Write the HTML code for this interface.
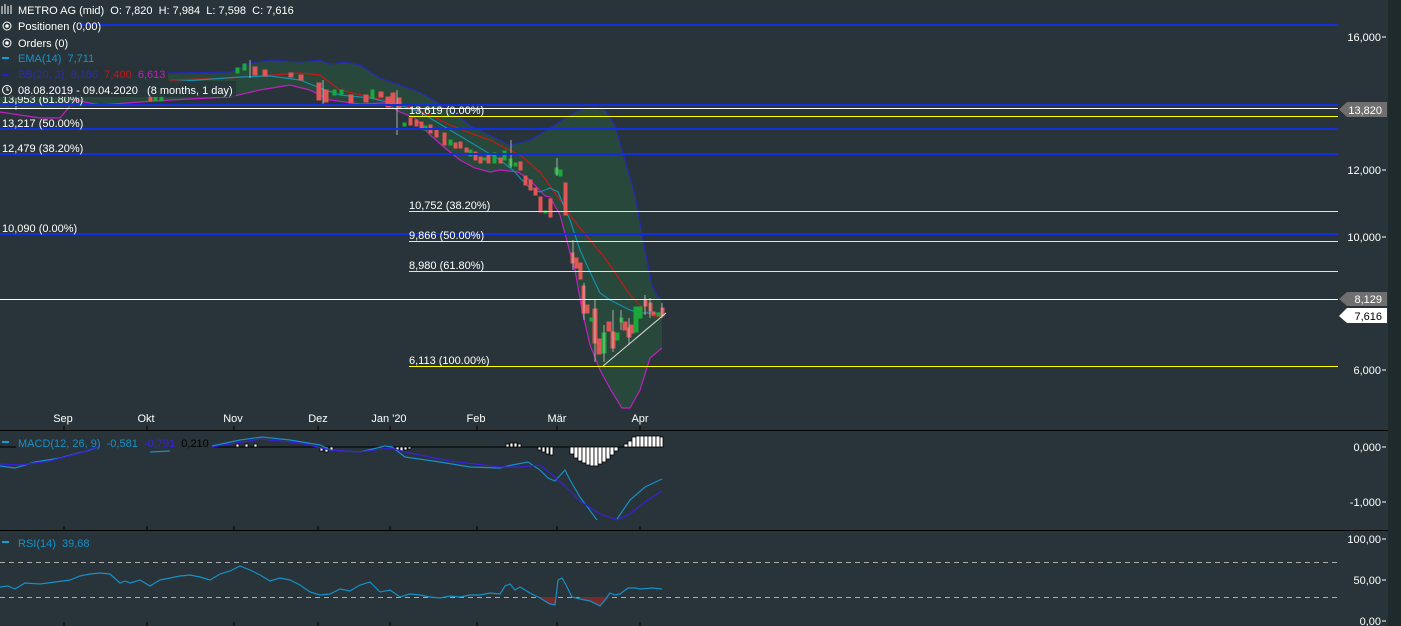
<!DOCTYPE html>
<html><head><meta charset="utf-8"><style>
html,body{margin:0;padding:0;background:#283439;overflow:hidden}
svg{display:block}
text{font-family:"Liberation Sans",sans-serif;font-size:11px;white-space:pre}
.h rect{shape-rendering:crispEdges}
</style></head><body>
<svg width="1401" height="626" viewBox="0 0 1401 626" xmlns="http://www.w3.org/2000/svg" xml:space="preserve">
<rect width="1401" height="626" fill="#283439"/>
<rect x="1388" y="0" width="13" height="626" fill="#1e2a2c"/>

<path d="M130,75 L170,73 230,72 240,68 250,63 270,60 300,62 320,60 330,64 345,62 360,65 380,78 400,85 420,92 450,110 470,125 490,135 510,145 530,140 550,128 565,118 580,110 595,107 605,110 615,125 625,160 635,195 645,250 652,285 658,297 662,298 L662,348 650,358 640,390 630,408 622,408 612,392 600,370 590,345 582,310 575,270 568,245 560,215 550,197 545,196 530,180 518,172 500,170 490,172 475,168 460,160 445,148 430,135 415,118 400,112 385,103 360,104 330,100 310,90 290,85 260,90 230,97 170,100 140,102 100,105 60,108 0,108 0,97 130,97 Z" fill="#27483a"/>
<path d="M130,75 L170,73 230,72 240,68 250,63 270,60 300,62 320,60 330,64 345,62 360,65 380,78 400,85 420,92 450,110 470,125 490,135 510,145 530,140 550,128 565,118 580,110 595,107 605,110 615,125 625,160 635,195 645,250 652,285 658,297 662,298" fill="none" stroke="#2626b8" stroke-width="1.2"/>
<path d="M0,112 L40,118 60,118 75,100 100,105 140,102 170,100 230,97 260,90 290,85 310,90 330,100 360,104 385,103 400,112 415,118 430,135 445,148 460,160 475,168 490,172 500,170 518,172 530,180 545,196 550,197 560,215 568,245 575,270 582,310 590,345 600,370 612,392 622,408 630,408 640,390 650,358 662,348" fill="none" stroke="#c020c0" stroke-width="1.2"/>
<path d="M170,80 L230,78 260,76 300,73 320,75 340,90 370,97 400,103 430,115 450,125 470,133 490,140 505,148 520,155 540,172 560,200 575,222 590,240 605,258 620,280 630,295 640,305 650,315 662,318" fill="none" stroke="#c81818" stroke-width="1.2"/>
<path d="M170,82 L240,77 270,76 300,80 320,88 340,95 370,98 400,105 420,112 450,130 475,145 500,160 515,172 520,178 530,188 540,192 550,188 558,192 570,220 580,250 590,272 600,293 610,300 620,305 630,310 640,313 650,313 662,313" fill="none" stroke="#1590b0" stroke-width="1.2"/>

<g stroke-width="1">
<g fill="#e05555" stroke="#e05555">
<rect x="149" y="96" width="3" height="5"/><rect x="253" y="67" width="4" height="8"/><rect x="263" y="70" width="4" height="6"/><rect x="289" y="73" width="4" height="4"/><rect x="299" y="75" width="4" height="5"/><rect x="317" y="83" width="4" height="17"/><rect x="324" y="90" width="4" height="12"/><rect x="349" y="95" width="4" height="8"/><rect x="364" y="95" width="4" height="7"/><rect x="379" y="92" width="4" height="5"/><rect x="386" y="97" width="4" height="10"/>
<rect x="391" y="93" width="4" height="12"/><rect x="397" y="98" width="4" height="10"/><rect x="409" y="118" width="3" height="7"/><rect x="415" y="120" width="3" height="6"/><rect x="420" y="122" width="3" height="6"/><rect x="429" y="125" width="3" height="8"/><rect x="435" y="130" width="3" height="7"/><rect x="443" y="133" width="3" height="12"/><rect x="454" y="143" width="3" height="5"/><rect x="459" y="142" width="3" height="6"/><rect x="465" y="148" width="3" height="4"/><rect x="474" y="152" width="3" height="8"/><rect x="479" y="157" width="3" height="6"/><rect x="487" y="155" width="3" height="8"/><rect x="499" y="158" width="3" height="5"/><rect x="519" y="162" width="3" height="8"/><rect x="524" y="176" width="3" height="9"/><rect x="529" y="180" width="3" height="10"/><rect x="534" y="188" width="3" height="7"/><rect x="539" y="197" width="3" height="15"/><rect x="549" y="199" width="3" height="18"/><rect x="564" y="183" width="3" height="32"/><rect x="571" y="253" width="3" height="10"/><rect x="575" y="258" width="3" height="10"/><rect x="579" y="263" width="3" height="16"/><rect x="582" y="286" width="3" height="27"/><rect x="586" y="305" width="3" height="8"/><rect x="593" y="309" width="4" height="34"/><rect x="597" y="339" width="4" height="15"/><rect x="607" y="322" width="4" height="9"/><rect x="611" y="332" width="4" height="16"/><rect x="623" y="322" width="4" height="8"/><rect x="627" y="328" width="4" height="9"/><rect x="630" y="325" width="4" height="8"/><rect x="644" y="300" width="3" height="6"/><rect x="649" y="303" width="3" height="8"/><rect x="652" y="312" width="3" height="3"/><rect x="661" y="308" width="3" height="8"/>
</g>
<g fill="#1aa83a" stroke="#1aa83a">
<rect x="154" y="97" width="3" height="4"/><rect x="160" y="96" width="3" height="5"/><rect x="236" y="68" width="3" height="5"/><rect x="243" y="64" width="3" height="6"/><rect x="333" y="90" width="3" height="5"/><rect x="340" y="90" width="3" height="4"/><rect x="371" y="90" width="3" height="8"/><rect x="403" y="123" width="3" height="3"/><rect x="424" y="126" width="3" height="4"/><rect x="449" y="140" width="3" height="5"/><rect x="469" y="150" width="3" height="6"/><rect x="483" y="158" width="3" height="2"/><rect x="493" y="153" width="3" height="10"/><rect x="503" y="151" width="3" height="9"/><rect x="509" y="159" width="3" height="7"/><rect x="514" y="163" width="3" height="3"/><rect x="544" y="211" width="3" height="2"/><rect x="555" y="168" width="3" height="6"/><rect x="559" y="170" width="3" height="6"/><rect x="590" y="318" width="3" height="3"/><rect x="602" y="333" width="4" height="20"/><rect x="616" y="333" width="3" height="7"/><rect x="620" y="318" width="3" height="4"/><rect x="634" y="307" width="4" height="25"/><rect x="638" y="307" width="4" height="11"/><rect x="657" y="313" width="3" height="3"/>
</g>
<g stroke="#c8c8c8" stroke-width="0.8">
<line x1="16" y1="98" x2="16" y2="110"/><line x1="397" y1="90" x2="397" y2="135"/><line x1="511" y1="140" x2="511" y2="168"/><line x1="557" y1="158" x2="557" y2="176"/><line x1="573" y1="240" x2="573" y2="270"/><line x1="584" y1="283" x2="584" y2="320"/><line x1="595" y1="300" x2="595" y2="362"/><line x1="604" y1="325" x2="604" y2="362"/><line x1="613" y1="310" x2="613" y2="352"/><line x1="621" y1="310" x2="621" y2="330"/><line x1="629" y1="318" x2="629" y2="345"/><line x1="645" y1="295" x2="645" y2="315"/><line x1="650" y1="298" x2="650" y2="318"/><line x1="662" y1="303" x2="662" y2="318"/><line x1="250" y1="60" x2="250" y2="78"/><line x1="323" y1="80" x2="323" y2="105"/>
</g>
</g>

<g class="h">
<rect x="80" y="24" width="1258" height="2" fill="#1230e0"/>
<rect x="0" y="104" width="1338" height="2" fill="#1230e0"/>
<rect x="0" y="108" width="1338" height="1" fill="#ffffff"/>
<rect x="409" y="116" width="929" height="1" fill="#ffff00"/>
<rect x="0" y="128" width="1338" height="2" fill="#1230e0"/>
<rect x="0" y="153" width="1338" height="2" fill="#1230e0"/>
<rect x="409" y="211" width="929" height="1" fill="#ffff00"/>
<rect x="0" y="233" width="1338" height="2" fill="#1230e0"/>
<rect x="409" y="241" width="929" height="1" fill="#ffff00"/>
<rect x="409" y="271" width="929" height="1" fill="#ffff00"/>
<rect x="0" y="299" width="1338" height="1" fill="#ffffff"/>
<rect x="409" y="366" width="929" height="1" fill="#ffff00"/>
</g>
<line x1="603" y1="366" x2="666" y2="313" stroke="#dddddd" stroke-width="1"/>

<g fill="#ffffff">
<text x="2" y="103">13,953 (61.80%)</text>
<text x="2" y="127">13,217 (50.00%)</text>
<text x="2" y="152">12,479 (38.20%)</text>
<text x="2" y="232">10,090 (0.00%)</text>
<text x="409" y="114">13,619 (0.00%)</text>
<text x="409" y="209">10,752 (38.20%)</text>
<text x="409" y="239">9,866 (50.00%)</text>
<text x="409" y="269">8,980 (61.80%)</text>
<text x="409" y="364">6,113 (100.00%)</text>
</g>

<rect x="0" y="66" width="168" height="15" fill="#283439" opacity="0.85"/>
<rect x="0" y="81" width="236" height="16" fill="#283439" opacity="0.85"/>
<g fill="#ffffff">
<path d="M2,6 v8 M5,4 v10 M8,6 v8 M11,5 v9" stroke="#fff" stroke-width="1" fill="none"/>
<text x="18" y="14">METRO AG (mid)  O: 7,820  H: 7,984  L: 7,598  C: 7,616</text>
<circle cx="7" cy="26" r="4" fill="none" stroke="#fff"/><circle cx="7" cy="26" r="1.8"/>
<text x="18" y="30">Positionen (0,00)</text>
<circle cx="7" cy="43" r="4" fill="none" stroke="#fff"/><circle cx="7" cy="43" r="1.8"/>
<text x="18" y="47">Orders (0)</text>
<rect x="2" y="57" width="7" height="2" fill="#1a9bd0"/>
<text x="18" y="62" fill="#1a90c8">EMA(14)  7,711</text>
<rect x="2" y="74" width="7" height="2" fill="#2222c0"/>
<text x="18" y="78"><tspan fill="#2a2ab8">BB(20, 2)  8,186  </tspan><tspan fill="#c01818">7,400  </tspan><tspan fill="#c020b0">6,613</tspan></text>
<circle cx="7" cy="90" r="4.5" fill="none" stroke="#fff"/><path d="M7,87 v3 h2" stroke="#fff" fill="none"/>
<text x="18" y="94">08.08.2019 - 09.04.2020   (8 months, 1 day)</text>
</g>

<g fill="#ffffff" text-anchor="end">
<text x="1381" y="41">16,000</text>
<text x="1381" y="174">12,000</text>
<text x="1381" y="241">10,000</text>
<text x="1381" y="374">6,000</text>
<text x="1381" y="451">0,000</text>
<text x="1381" y="506">-1,000</text>
<text x="1381" y="543">100,00</text>
<text x="1381" y="584">50,00</text>
<text x="1381" y="625">0,00</text>
</g>
<g stroke="#ffffff"><line x1="1382" y1="37" x2="1386" y2="37"/><line x1="1382" y1="170" x2="1386" y2="170"/><line x1="1382" y1="237" x2="1386" y2="237"/><line x1="1382" y1="370" x2="1386" y2="370"/><line x1="1382" y1="447" x2="1386" y2="447"/><line x1="1382" y1="502" x2="1386" y2="502"/><line x1="1382" y1="539" x2="1386" y2="539"/><line x1="1382" y1="580" x2="1386" y2="580"/><line x1="1382" y1="621" x2="1386" y2="621"/></g>
<path d="M1339,109.5 L1347,102 H1387 V117 H1347 Z" fill="#6f6f6f"/>
<text x="1382" y="114" fill="#fff" text-anchor="end">13,820</text>
<path d="M1339,299 L1347,292 H1387 V306 H1347 Z" fill="#6f6f6f"/>
<text x="1382" y="303" fill="#fff" text-anchor="end">8,129</text>
<path d="M1339,316 L1347,308 H1387 V323 H1347 Z" fill="#ffffff"/>
<text x="1382" y="320" fill="#000" text-anchor="end">7,616</text>

<g fill="#ffffff" text-anchor="middle">
<text x="63" y="422">Sep</text><text x="146" y="422">Okt</text><text x="233" y="422">Nov</text><text x="318" y="422">Dez</text><text x="389" y="422">Jan '20</text><text x="476" y="422">Feb</text><text x="557" y="422">Mär</text><text x="640" y="422">Apr</text>
</g>
<line x1="0" y1="430.5" x2="1388" y2="430.5" stroke="#000" stroke-width="1"/>
<line x1="0" y1="530.5" x2="1388" y2="530.5" stroke="#000" stroke-width="1"/>
<g stroke="#000"><line x1="64" y1="426" x2="64" y2="430"/><line x1="147" y1="426" x2="147" y2="430"/><line x1="234" y1="426" x2="234" y2="430"/><line x1="318" y1="426" x2="318" y2="430"/><line x1="390" y1="426" x2="390" y2="430"/><line x1="477" y1="426" x2="477" y2="430"/><line x1="557" y1="426" x2="557" y2="430"/><line x1="640" y1="426" x2="640" y2="430"/>
<line x1="64" y1="526" x2="64" y2="530"/><line x1="147" y1="526" x2="147" y2="530"/><line x1="234" y1="526" x2="234" y2="530"/><line x1="318" y1="526" x2="318" y2="530"/><line x1="390" y1="526" x2="390" y2="530"/><line x1="477" y1="526" x2="477" y2="530"/><line x1="557" y1="526" x2="557" y2="530"/><line x1="640" y1="526" x2="640" y2="530"/>
<line x1="64" y1="622" x2="64" y2="626"/><line x1="147" y1="622" x2="147" y2="626"/><line x1="234" y1="622" x2="234" y2="626"/><line x1="318" y1="622" x2="318" y2="626"/><line x1="390" y1="622" x2="390" y2="626"/><line x1="477" y1="622" x2="477" y2="626"/><line x1="557" y1="622" x2="557" y2="626"/><line x1="640" y1="622" x2="640" y2="626"/></g>

<line x1="212" y1="447" x2="662" y2="447" stroke="#000" stroke-width="1"/>
<line x1="0" y1="447" x2="16" y2="447" stroke="#000"/>
<g fill="#fff" stroke="#000" stroke-width="0.8">
<rect x="236" y="444" width="3" height="3"/><rect x="245" y="444" width="3" height="3"/><rect x="254" y="444" width="3" height="3"/>
<rect x="320" y="447" width="3" height="4"/><rect x="325" y="447" width="3" height="5"/><rect x="330" y="447" width="3" height="3"/>
<rect x="396" y="447" width="3" height="3"/><rect x="400" y="447" width="3" height="4"/><rect x="404" y="447" width="3" height="3"/><rect x="408" y="447" width="3" height="2"/>
<rect x="506" y="444" width="3" height="3"/><rect x="510" y="443" width="3" height="4"/><rect x="514" y="443" width="3" height="4"/><rect x="518" y="444" width="3" height="3"/>
<rect x="538" y="447" width="3" height="3"/><rect x="542" y="447" width="3" height="5"/><rect x="546" y="447" width="3" height="7"/><rect x="550" y="447" width="3" height="8"/>
<rect x="570" y="447" width="4" height="7"/><rect x="574" y="447" width="4" height="11"/><rect x="578" y="447" width="4" height="14"/><rect x="582" y="447" width="4" height="16"/><rect x="586" y="447" width="4" height="18"/><rect x="590" y="447" width="4" height="19"/><rect x="594" y="447" width="4" height="19"/><rect x="598" y="447" width="4" height="17"/><rect x="602" y="447" width="4" height="15"/><rect x="606" y="447" width="4" height="12"/><rect x="610" y="447" width="4" height="8"/><rect x="614" y="447" width="4" height="4"/>
<rect x="624" y="444" width="4" height="3"/><rect x="628" y="441" width="4" height="6"/><rect x="632" y="437" width="4" height="10"/><rect x="636" y="436" width="4" height="11"/><rect x="640" y="436" width="4" height="11"/><rect x="644" y="436" width="4" height="11"/><rect x="648" y="436" width="4" height="11"/><rect x="652" y="436" width="4" height="11"/><rect x="656" y="436" width="4" height="11"/><rect x="660" y="437" width="3" height="10"/>
</g>
<path d="M0,466 L15,468 35,462 60,458 90,450 100,446 M150,452 L170,451 M212,446 L240,440 262,437 290,440 320,445 330,450 360,452 385,446 392,447 405,457 440,462 470,467 500,468 512,465 528,462 540,470 548,478 555,481 565,470 570,480 580,497 597,520 M617,519 L630,500 645,487 662,479" fill="none" stroke="#1590c8" stroke-width="1.2"/>
<path d="M0,464 L20,465 50,461 80,453 100,446 M212,447 L260,439 300,443 330,450 360,452 390,448 410,453 450,461 500,467 520,467 540,465 555,477 565,486 580,501 600,514 617,520 630,514 645,502 662,491" fill="none" stroke="#3a20d8" stroke-width="1.2"/>
<rect x="2" y="441" width="7" height="2" fill="#1a9bd0"/>
<text x="18" y="447"><tspan fill="#1590c8">MACD(12, 26, 9)  -0,581  </tspan><tspan fill="#3a20d8">-0,791  </tspan><tspan fill="#000">0,210</tspan></text>

<line x1="0" y1="562.5" x2="1338" y2="562.5" stroke="#aaaaaa" stroke-dasharray="5,4"/>
<line x1="0" y1="597.5" x2="1338" y2="597.5" stroke="#aaaaaa" stroke-dasharray="5,4"/>
<path d="M540,597 L548,604 555,605 556,597 Z M578,597 L590,601 600,606 610,597 Z" fill="#7a2a2a"/>
<path d="M0,587 L8,586 15,589 25,583 40,584 55,582 70,580 80,576 90,574 100,573 110,574 120,583 125,581 130,583 140,580 150,586 160,580 170,578 180,576 190,575 200,577 210,580 220,574 230,571 240,566 250,570 260,575 270,581 280,578 290,580 300,585 310,592 320,595 330,594 340,589 350,591 360,585 370,582 380,592 390,590 400,597 410,594 420,595 430,597 440,598 450,596 460,597 470,595 480,595 490,593 500,594 505,586 510,584 515,590 520,587 530,593 540,598 550,604 555,605 558,580 562,578 566,585 572,597 580,599 590,601 600,606 605,600 610,593 615,595 620,594 628,588 635,588 640,589 652,588 662,589" fill="none" stroke="#1590c8" stroke-width="1.2"/>
<rect x="2" y="541" width="7" height="2" fill="#1a9bd0"/>
<text x="18" y="547" fill="#1590c8">RSI(14)  39,68</text>
</svg>
</body></html>
